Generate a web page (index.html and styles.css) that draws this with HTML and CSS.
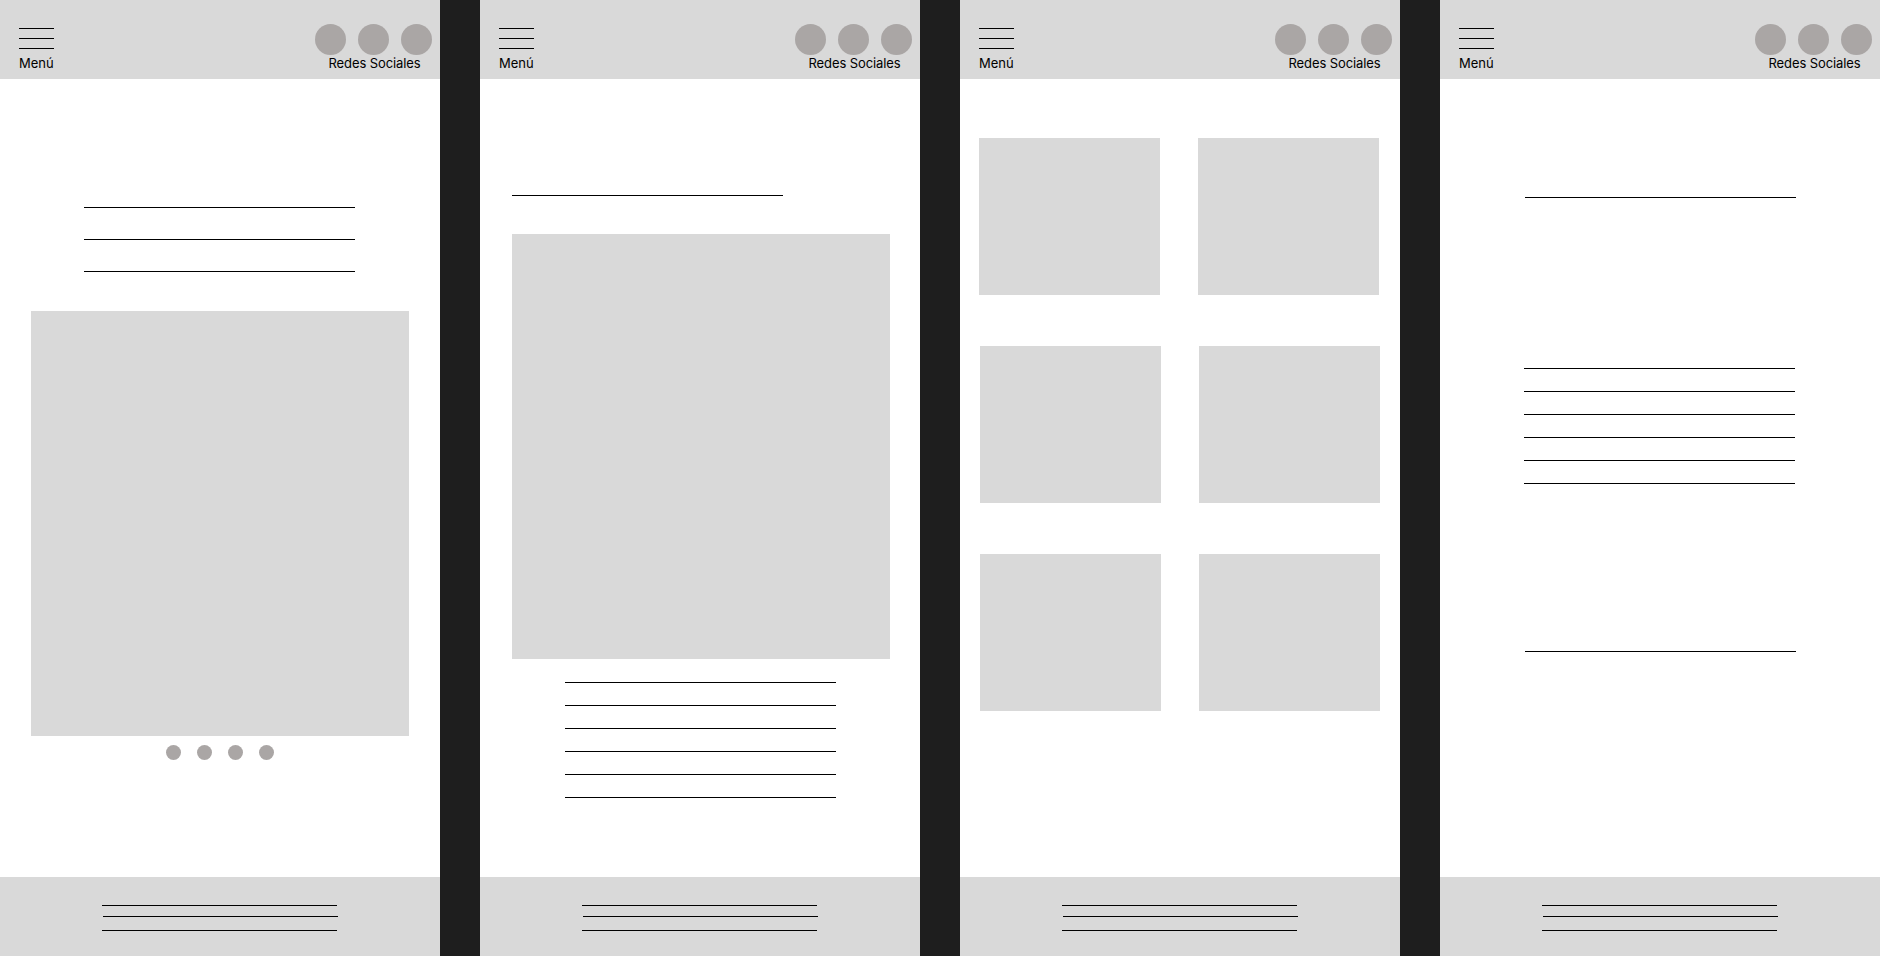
FILE: index.html
```html
<!DOCTYPE html>
<html lang="es">
<head>
    <meta charset="UTF-8">
    <title>Wireframes</title>
    <link rel="stylesheet" href="styles.css">
</head>
<body>
    <!-- Pantalla 1: inicio -->
    <section class="screen">
        <header class="top-bar">
            <div class="menu">
                <div class="burger"><span></span><span></span><span></span></div>
                <p class="label">Menú</p>
            </div>
            <div class="social">
                <div class="circles"><span></span><span></span><span></span></div>
                <p class="label">Redes Sociales</p>
            </div>
        </header>
        <main class="content home">
            <div class="lines">
                <div class="rule"></div>
                <div class="rule"></div>
                <div class="rule"></div>
            </div>
            <div class="slider"></div>
            <div class="dots"><span></span><span></span><span></span><span></span></div>
        </main>
        <footer class="bottom-bar">
            <div class="rule"></div>
            <div class="rule"></div>
            <div class="rule"></div>
        </footer>
    </section>

    <!-- Pantalla 2: detalle -->
    <section class="screen">
        <header class="top-bar">
            <div class="menu">
                <div class="burger"><span></span><span></span><span></span></div>
                <p class="label">Menú</p>
            </div>
            <div class="social">
                <div class="circles"><span></span><span></span><span></span></div>
                <p class="label">Redes Sociales</p>
            </div>
        </header>
        <main class="content detail">
            <div class="rule title"></div>
            <div class="picture"></div>
            <div class="lines">
                <div class="rule"></div>
                <div class="rule"></div>
                <div class="rule"></div>
                <div class="rule"></div>
                <div class="rule"></div>
                <div class="rule"></div>
            </div>
        </main>
        <footer class="bottom-bar">
            <div class="rule"></div>
            <div class="rule"></div>
            <div class="rule"></div>
        </footer>
    </section>

    <!-- Pantalla 3: galería -->
    <section class="screen">
        <header class="top-bar">
            <div class="menu">
                <div class="burger"><span></span><span></span><span></span></div>
                <p class="label">Menú</p>
            </div>
            <div class="social">
                <div class="circles"><span></span><span></span><span></span></div>
                <p class="label">Redes Sociales</p>
            </div>
        </header>
        <main class="content gallery">
            <div class="tile"></div>
            <div class="tile"></div>
            <div class="tile"></div>
            <div class="tile"></div>
            <div class="tile"></div>
            <div class="tile"></div>
        </main>
        <footer class="bottom-bar">
            <div class="rule"></div>
            <div class="rule"></div>
            <div class="rule"></div>
        </footer>
    </section>

    <!-- Pantalla 4: texto -->
    <section class="screen">
        <header class="top-bar">
            <div class="menu">
                <div class="burger"><span></span><span></span><span></span></div>
                <p class="label">Menú</p>
            </div>
            <div class="social">
                <div class="circles"><span></span><span></span><span></span></div>
                <p class="label">Redes Sociales</p>
            </div>
        </header>
        <main class="content text-page">
            <div class="rule title"></div>
            <div class="lines">
                <div class="rule"></div>
                <div class="rule"></div>
                <div class="rule"></div>
                <div class="rule"></div>
                <div class="rule"></div>
                <div class="rule"></div>
            </div>
            <div class="rule closing"></div>
        </main>
        <footer class="bottom-bar">
            <div class="rule"></div>
            <div class="rule"></div>
            <div class="rule"></div>
        </footer>
    </section>
</body>
</html>
```

FILE: styles.css
```css
/* styles.css */
html, body {
    margin: 0;
    padding: 0;
    height: 956px;
    overflow: hidden;
}
body {
    font-family: Inter, "Liberation Sans", sans-serif;
    font-size: 13px;
    color: #000;
    background-color: #1e1e1e;
    display: flex;
    gap: 40px;
}
.screen {
    width: 440px;
    height: 956px;
    background-color: #fff;
    display: flex;
    flex-direction: column;
}
.rule {
    width: 271px;
    height: 1px;
    background-color: #000;
}

/* header */
.top-bar {
    height: 79px;
    box-sizing: border-box;
    background-color: #d9d9d9;
    display: flex;
    justify-content: space-between;
    align-items: flex-start;
    padding: 24px 8px 0 19px;
}
.menu {
    padding-top: 4px;
}
.burger {
    display: flex;
    flex-direction: column;
    gap: 9px;
    width: 35px;
}
.burger span {
    height: 1px;
    background-color: #000;
}
.label {
    margin: 0;
    line-height: 16px;
}
.menu .label {
    margin-top: 6px;
}
.social {
    display: flex;
    flex-direction: column;
    align-items: center;
}
.social .label {
    margin-left: 2px;
    letter-spacing: -0.1px;
}
.circles {
    display: flex;
    gap: 12px;
}
.circles span {
    width: 31px;
    height: 31px;
    border-radius: 50%;
    background-color: #aaa6a5;
}

/* content */
.content {
    flex: 1;
    display: flex;
    flex-direction: column;
    align-items: flex-start;
}
.lines {
    display: flex;
    flex-direction: column;
    gap: 22px;
}

.home .lines {
    margin: 128px 0 0 84px;
    gap: 31px;
}
.slider {
    margin: 39px 0 0 31px;
    width: 378px;
    height: 425px;
    background-color: #d9d9d9;
}
.dots {
    align-self: stretch;
    margin-top: 9px;
    display: flex;
    justify-content: center;
    gap: 16px;
}
.dots span {
    width: 15px;
    height: 15px;
    border-radius: 50%;
    background-color: #aaa6a5;
}

.detail .title {
    margin: 116px 0 0 32px;
}
.picture {
    margin: 38px 0 0 32px;
    width: 378px;
    height: 425px;
    background-color: #d9d9d9;
}
.detail .lines {
    margin: 23px 0 0 85px;
}

.gallery {
    display: grid;
    grid-template-columns: 181px 181px;
    grid-auto-rows: 157px;
    column-gap: 38px;
    row-gap: 51px;
    align-content: start;
    align-items: stretch;
    padding: 59px 0 0 20px;
}
.tile {
    background-color: #d9d9d9;
}
.tile:nth-child(-n+2) {
    margin: 0 1px 0 -1px;
}

.text-page .title {
    margin: 118px 0 0 85px;
}
.text-page .lines {
    margin: 170px 0 0 84px;
}
.text-page .closing {
    margin: 167px 0 0 85px;
}

/* footer */
.bottom-bar {
    height: 79px;
    box-sizing: border-box;
    background-color: #d9d9d9;
    padding: 28px 0 0 102px;
}
.bottom-bar .rule {
    width: 235px;
}
.bottom-bar .rule:nth-child(2) {
    margin: 10px 0 0 1px;
}
.bottom-bar .rule:nth-child(3) {
    margin-top: 13px;
}
```
